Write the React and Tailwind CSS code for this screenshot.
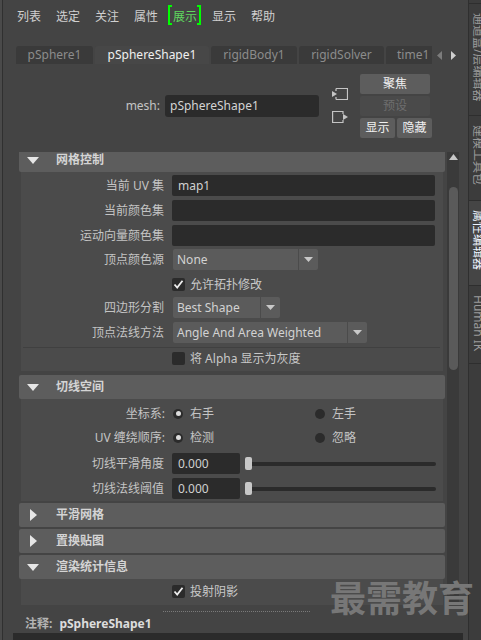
import React from 'react';

const DownTri = () => (
  <svg width="12" height="7" viewBox="0 0 12 7"><polygon points="0,0 12,0 6,7" fill="#e6e6e6" /></svg>
);

const RightTri = () => (
  <svg width="7" height="12" viewBox="0 0 7 12"><polygon points="0,0 7,6 0,12" fill="#e6e6e6" /></svg>
);

const Header = ({ title, open, className = '' }) => (
  <div className={`h-[24px] shrink-0 bg-[#5d5d5d] rounded-[2px] flex items-center ${className}`}>
    {open ? (
      <div className="w-[37px] pl-[8px] flex items-center"><DownTri /></div>
    ) : (
      <div className="w-[37px] pl-[11px] flex items-center"><RightTri /></div>
    )}
    <span className="font-bold text-[#d4d4d4]">{title}</span>
  </div>
);

const Row = ({ label, children, className = '' }) => (
  <div className={`flex items-center h-[21px] ${className}`}>
    <div className="w-[143px] text-right whitespace-nowrap">{label}</div>
    <div className="ml-[8px] flex-1 flex items-center pr-[8px]">{children}</div>
  </div>
);

const Field = ({ value = '' }) => (
  <div className="h-[21px] w-full bg-[#2b2b2b] rounded-[2px] pl-[6px] flex items-center text-[#d0d0d0]">{value}</div>
);

const Dropdown = ({ value, textW }) => (
  <div className="h-[21px] ml-[1px] flex bg-[#5b5b5b] rounded-[2px]">
    <div className={`${textW} pl-[4px] flex items-center text-[#d2d2d2] whitespace-nowrap`}>{value}</div>
    <div className="w-px bg-[#4b4b4b]" />
    <div className="w-[19px] flex items-center justify-center">
      <svg width="9" height="5" viewBox="0 0 9 5"><polygon points="0,0 9,0 4.5,5" fill="#c8c8c8" /></svg>
    </div>
  </div>
);

const Check = ({ checked }) => (
  <div className="w-[13px] h-[13px] bg-[#2b2b2b] rounded-[2px] flex items-center justify-center">
    {checked && (
      <svg width="11" height="11" viewBox="0 0 11 11">
        <polyline points="1.5,5.5 4.2,8.5 9.5,1.8" fill="none" stroke="#eeeeee" strokeWidth="1.8" />
      </svg>
    )}
  </div>
);

const CheckRow = ({ checked, label, className = '' }) => (
  <div className={`flex items-center h-[21px] ${className}`}>
    <div className="w-[151px]" />
    <Check checked={checked} />
    <span className="ml-[5px] text-[#c8c8c8]">{label}</span>
  </div>
);

const Radio = ({ on }) => (
  <div className="w-[10px] h-[10px] rounded-full bg-[#2b2b2b] flex items-center justify-center">
    {on && <div className="w-[5px] h-[5px] rounded-full bg-[#dcdcdc]" />}
  </div>
);

const RadioRow = ({ label, a, b, className = '' }) => (
  <div className={`flex items-center h-[21px] ${className}`}>
    <div className="w-[144px] text-right whitespace-nowrap">{label}</div>
    <div className="ml-[8px]"><Radio on /></div>
    <span className="ml-[7px] w-[125px]">{a}</span>
    <Radio />
    <span className="ml-[7px]">{b}</span>
  </div>
);

const SliderRow = ({ label, className = '' }) => (
  <div className={`flex items-center h-[21px] ${className}`}>
    <div className="w-[143px] text-right whitespace-nowrap">{label}</div>
    <div className="ml-[8px] w-[68px] h-[21px] bg-[#2b2b2b] rounded-[2px] pl-[6px] flex items-center text-[#d0d0d0]">0.000</div>
    <div className="ml-[5px] w-[191px] h-[13px] relative flex items-center">
      <div className="w-full h-[4px] rounded-full bg-[#2b2b2b]" />
      <div className="absolute left-0 top-0 w-[7px] h-[13px] rounded-[2px] bg-[#c8c8c8]" />
    </div>
  </div>
);

const Tab = ({ label, active, w, left }) => (
  <div
    className={`${w} h-[18px] shrink-0 rounded-t-[3px] flex items-center whitespace-nowrap ${left ? 'pl-[11px]' : 'justify-center'} ${
      active ? 'bg-[#474747] text-[#f0f0f0]' : 'bg-[#3a3a3a] text-[#8c8c8c]'
    }`}
  >
    {label}
  </div>
);

const SideTab = ({ label, active, h }) => (
  <div
    className={`${h} shrink-0 border-b border-[#2e2e2e] pt-[9px] pl-[3px] overflow-hidden ${
      active ? 'bg-[#454545] text-[#eef4ff]' : 'bg-[#3c3c3c] text-[#9a9a9a]'
    }`}
  >
    <div className="[writing-mode:vertical-rl] [text-orientation:sideways] leading-[12px] whitespace-nowrap">{label}</div>
  </div>
);

export default function App() {
  return (
    <div className="w-[481px] h-[640px] bg-[#444444] flex relative overflow-hidden text-[12px] text-[#c4c4c4] [font-family:'Noto_Sans','Noto_Sans_CJK_SC',sans-serif]">
      <div className="w-[2px] bg-[#4a4a4a]" />
      <div className="w-px bg-[#303030]" />

      <div className="w-[465px] flex flex-col">
        {/* menu */}
        <div className="h-[34px] flex items-center pl-[14px] gap-[15px] text-[#d0d0d0] shrink-0">
          <span>列表</span>
          <span>选定</span>
          <span>关注</span>
          <span>属性</span>
          <span className="relative text-[#5fd85f]">
            <span className="absolute -left-[5px] -top-[3px] w-[4px] h-[20px] border-[2px] border-r-0 border-[#00ff00]" />
            展示
            <span className="absolute -right-[4px] -top-[3px] w-[4px] h-[20px] border-[2px] border-l-0 border-[#00ff00]" />
          </span>
          <span>显示</span>
          <span>帮助</span>
        </div>

        {/* tabs */}
        <div className="mt-[12px] h-[18px] flex items-center pl-[13px] shrink-0">
          <div className="w-[416px] h-[18px] overflow-hidden flex gap-[2px]">
            <Tab label="pSphere1" w="w-[77px]" />
            <Tab label="pSphereShape1" w="w-[114px]" active />
            <Tab label="rigidBody1" w="w-[86px]" />
            <Tab label="rigidSolver" w="w-[85px]" />
            <Tab label="time1" w="w-[60px]" left />
          </div>
          <svg className="ml-[5px]" width="5" height="9" viewBox="0 0 5 9"><polygon points="5,0 0,4.5 5,9" fill="#7c7c7c" /></svg>
          <svg className="ml-[9px]" width="5" height="9" viewBox="0 0 5 9"><polygon points="0,0 5,4.5 0,9" fill="#cfcfcf" /></svg>
        </div>

        {/* node header */}
        <div className="h-[74px] flex items-start shrink-0">
          <div className="w-[157px] mt-[31px] h-[22px] leading-[22px] text-right text-[#c4c4c4]">mesh:</div>
          <div className="ml-[5px] mt-[31px] w-[154px] h-[22px] bg-[#2b2b2b] rounded-[3px] pl-[5px] flex items-center text-[#d4d4d4]">
            pSphereShape1
          </div>
          <div className="ml-[13px] mt-[23px] w-[16px] flex flex-col gap-[9px]">
            <svg width="16" height="14" viewBox="0 0 16 14">
              <path d="M4 1.5 H15.5 V12.5 H4 M4 1.5 V4 M4 10 V12.5" fill="none" stroke="#c4c4c4" strokeWidth="1.2" />
              <polygon points="0,4 5,7 0,10" fill="#c4c4c4" />
            </svg>
            <svg width="16" height="14" viewBox="0 0 16 14">
              <path d="M11 4 V1.5 H0.6 V12.5 H11 V10" fill="none" stroke="#c4c4c4" strokeWidth="1.2" />
              <polygon points="11,4 16,7 11,10" fill="#c4c4c4" />
            </svg>
          </div>
          <div className="ml-[12px] mt-[10px] w-[72px] flex flex-col gap-[2px]">
            <div className="w-[70px] h-[20px] bg-[#5d5d5d] rounded-[2px] flex items-center justify-center text-[#f0f0f0]">聚焦</div>
            <div className="w-[70px] h-[20px] bg-[#4a4a4a] rounded-[2px] flex items-center justify-center text-[#6e6e6e]">预设</div>
            <div className="flex gap-[2px]">
              <div className="w-[35px] h-[20px] bg-[#5d5d5d] rounded-[2px] flex items-center justify-center text-[#f0f0f0]">显示</div>
              <div className="w-[35px] h-[20px] bg-[#5d5d5d] rounded-[2px] flex items-center justify-center text-[#f0f0f0]">隐藏</div>
            </div>
          </div>
        </div>

        {/* scroll area */}
        <div className="mt-[14px] h-[453px] flex shrink-0">
          <div className="ml-[16px] w-[426px] overflow-hidden">
            <div className="-mt-[4px] flex flex-col">
              <Header title="网格控制" open />
              <div className="mx-[2px] bg-[#4b4b4b] pt-[3px] pb-[2px] flex flex-col">
                <Row label="当前 UV 集"><Field value="map1" /></Row>
                <Row label="当前颜色集" className="mt-[4px]"><Field /></Row>
                <Row label="运动向量颜色集" className="mt-[4px]"><Field /></Row>
                <Row label="顶点颜色源" className="mt-[3px]"><Dropdown value="None" textW="w-[125px]" /></Row>
                <CheckRow checked label="允许拓扑修改" className="mt-[4px]" />
                <Row label="四边形分割" className="mt-[2px]"><Dropdown value="Best Shape" textW="w-[87px]" /></Row>
                <Row label="顶点法线方法" className="mt-[4px]"><Dropdown value="Angle And Area Weighted" textW="w-[174px]" /></Row>
                <div className="mt-[4px] mx-[2px] mr-[3px] h-px bg-[#404040]" />
                <CheckRow label="将 Alpha 显示为灰度" />
              </div>

              <Header title="切线空间" open className="mt-[4px]" />
              <div className="mx-[2px] bg-[#4b4b4b] pb-[2px] flex flex-col">
                <RadioRow label="坐标系:" a="右手" b="左手" className="mt-[4px]" />
                <RadioRow label="UV 缠绕顺序:" a="检测" b="忽略" className="mt-[3px]" />
                <SliderRow label="切线平滑角度" className="mt-[5px]" />
                <SliderRow label="切线法线阈值" className="mt-[4px]" />
              </div>

              <Header title="平滑网格" className="mt-[2px]" />
              <Header title="置换贴图" className="mt-[2px]" />
              <Header title="渲染统计信息" open className="mt-[2px]" />
              <div className="mx-[2px] bg-[#4b4b4b] pt-[2px] pb-[6px] flex flex-col">
                <CheckRow checked label="投射阴影" />
              </div>
            </div>
          </div>
          <div className="ml-[2px] w-[12px] h-full bg-[#3a3a3a] flex flex-col items-center">
            <svg className="mt-[2px]" width="9" height="6" viewBox="0 0 9 6"><polygon points="0,6 9,6 4.5,0" fill="#c8c8c8" /></svg>
            <div className="mt-[27px] w-[9px] h-[183px] rounded-full bg-[#5a5a5a]" />
          </div>
        </div>

        {/* notes */}
        <div className="mt-[6px] ml-[160px] w-[147px] border-t border-dotted border-[#7a7a7a] shrink-0" />
        <div className="mt-[5px] ml-[22px] h-[14px] leading-[14px] flex font-bold shrink-0">
          <span className="text-[#b4b4b4]">注释:</span>
          <span className="ml-[7px] text-[#dcdcdc]">pSphereShape1</span>
        </div>
        <div className="mt-[2px] ml-[10px] w-[450px] flex-1 bg-[#2b2b2b]" />
      </div>

      <div className="w-px bg-[#2f2f2f]" />

      {/* side tabs */}
      <div className="w-[12px] flex flex-col bg-[#3c3c3c]">
        <div className="h-[4px] shrink-0 border-b border-[#2e2e2e]" />
        <SideTab label="通道盒/层编辑器" h="h-[112px]" />
        <SideTab label="建模工具包" h="h-[85px]" />
        <SideTab label="属性编辑器" active h="h-[85px]" />
        <SideTab label="Human IK" h="h-[78px]" />
      </div>

      <div className="absolute left-[330px] top-[579px] text-[36px] leading-[40px] font-bold text-[#777777] whitespace-nowrap tracking-[0px]">
        最需教育
      </div>
    </div>
  );
}
